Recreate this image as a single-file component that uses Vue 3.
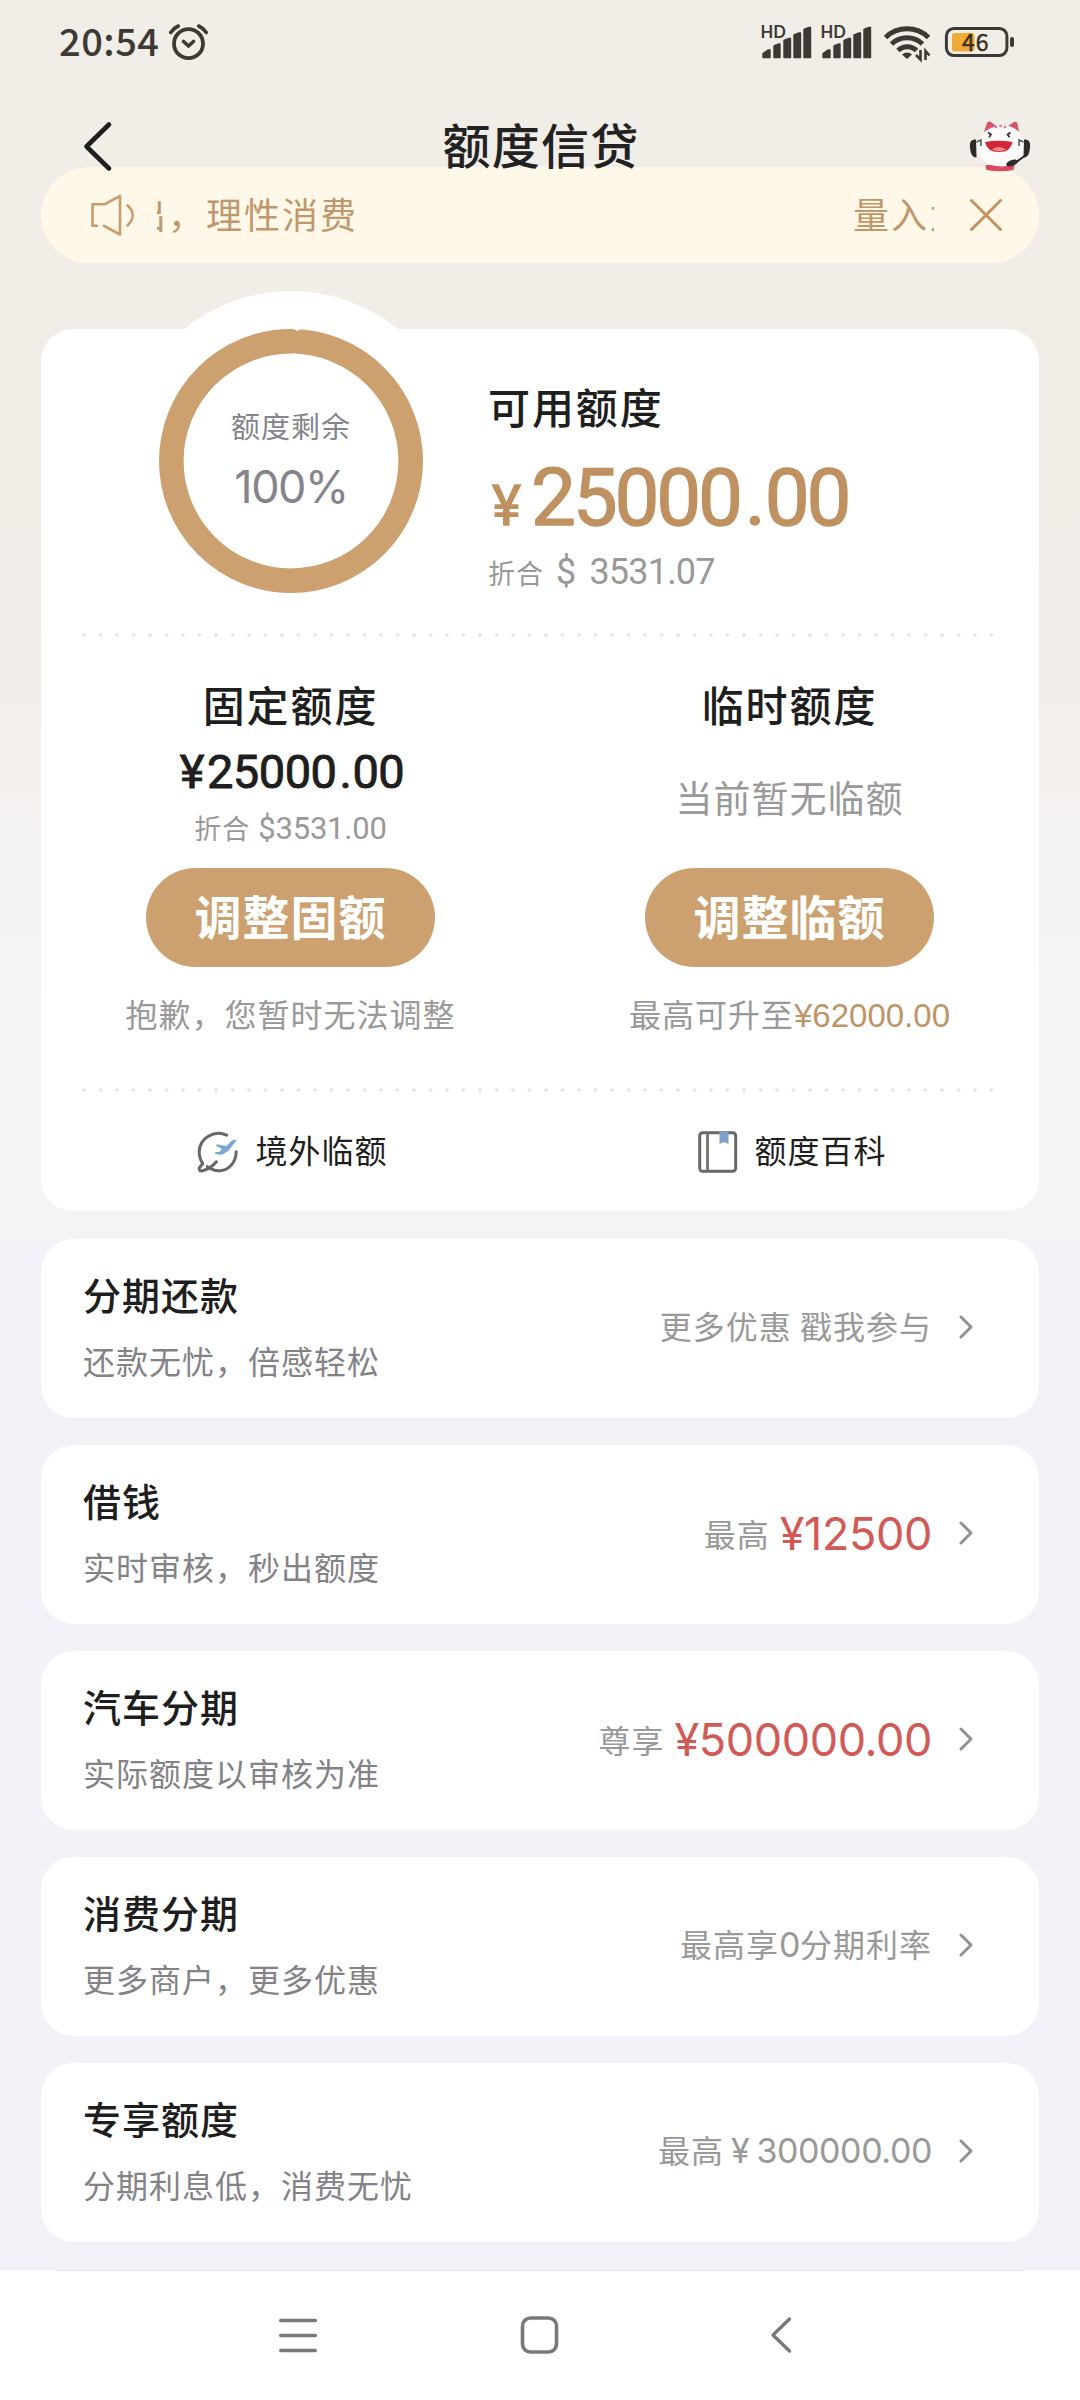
<script setup>
const offers = [
  { title: '分期还款', sub: '还款无忧，倍感轻松', note: '更多优惠 戳我参与' },
  { title: '借钱', sub: '实时审核，秒出额度', note: '最高', amount: '¥12500' },
  { title: '汽车分期', sub: '实际额度以审核为准', note: '尊享', amount: '¥500000.00' },
  { title: '消费分期', sub: '更多商户，更多优惠', note: '最高享', digits: '0', tail: '分期利率' },
  { title: '专享额度', sub: '分期利息低，消费无忧', note: '最高', yen: '¥', digits: '300000.00' }
]
const bars = [
  'M2 57.5V53.5L7 50H9V57.5Z',
  'M13 57.5V46L18 44H19V57.5Z',
  'M23 57.5V40.500L28 38.500H29.500V57.5Z',
  'M33 57.5V35L38 33H39.500V57.5Z',
  'M43 57.5V29.500L48 27.500H49.500V57.5Z'
]
</script>

<template>
  <div class="screen">
    <header class="status">
      <div class="clock">20:54</div>
      <svg class="alarm" width="42" height="40" viewBox="168 22 42 40" fill="none" stroke="#3d3935" stroke-linecap="round">
        <circle cx="188.500" cy="43.700" r="14.500" stroke-width="3.800" />
        <path d="M183.500 41.500l5 4.500 5-4.500" stroke-width="3.600" stroke-linejoin="round" />
        <path d="M170.700 32.500q3-4.500 7.600-6.500M206.300 32.500q-3-4.500-7.600-6.500" stroke-width="3.600" />
      </svg>
      <div class="indicators">
        <svg v-for="n in 2" :key="n" class="signal" width="60" height="80" viewBox="0 0 60 80">
          <text x="-0.500" y="38" class="hd">HD</text>
          <path v-for="b in bars" :key="b" :d="b" fill="#3d3935" stroke="#3d3935" stroke-width="1.400" stroke-linejoin="round" />
        </svg>
        <svg class="wifi" width="50" height="80" viewBox="882 0 50 80" fill="none" stroke="#3d3935" stroke-width="5">
          <path d="M885.500 37.500a31 31 0 0 1 43 0" />
          <path d="M891.500 44a22.500 22.500 0 0 1 31 0" />
          <path d="M898 50.500a13 13 0 0 1 18.500 0" />
          <path d="M907 59l-5-4.500q5-4 10 0z" fill="#3d3935" stroke="none" />
          <path d="M920.500 50v9.500l-4.500-4.500M925.500 60v-9l4 4.500" stroke-width="2.600" />
        </svg>
        <svg class="battery" width="74" height="80" viewBox="943 0 74 80">
          <rect x="952" y="33" width="22.500" height="18.500" rx="3" fill="#f0aa38" />
          <rect x="946.400" y="28.400" width="60.500" height="27.200" rx="7.500" fill="none" stroke="#3d3935" stroke-width="3" />
          <rect x="1010" y="37" width="4" height="10" rx="2" fill="#3d3935" />
          <text x="962" y="51" class="level">46</text>
        </svg>
      </div>
    </header>

    <nav class="titlebar">
      <svg class="back" width="34" height="56" viewBox="80 118 34 56">
        <path d="M109 124.500L86.500 146.500L109 168.500" fill="none" stroke="#1f1f1f" stroke-width="4.600" stroke-linecap="round" stroke-linejoin="round" />
      </svg>
      <h1>额度信贷</h1>
      <svg class="mascot" width="64" height="54" viewBox="968 118 64 54">
        <path d="M984 132l3-9q1-2.500 4-1l5 4zM1008 126l6-4q3-1 3.500 2l1.500 8z" fill="#d9506a" />
        <path d="M985.500 165h29l-1 5q-13 2.500-27 0z" fill="#dc4a60" />
        <path d="M1001.500 125.500c13-1 20.500 7 22.500 18 2.500 14-7 23-22.500 23s-25-9-22.500-23c2-11 9.500-17 22.500-18z" fill="#fdfafa" />
        <circle cx="996" cy="127" r="1.300" fill="#e2708a" /><circle cx="1000.500" cy="126" r="1.300" fill="#e2708a" /><circle cx="1005" cy="127" r="1.300" fill="#e2708a" />
        <path d="M988 132.500l3 2-2 2.800M1010.500 132.500l-3 2 2 2.800" fill="none" stroke="#2d2527" stroke-width="1.600" />
        <path d="M985 142q13.500-2.500 27.500 0-1.500 10-13.500 10t-14-10z" fill="#d02835" />
        <path d="M992 149.500q6.500-5 14 0-6 3.500-14 0z" fill="#ef8a8c" />
        <path d="M976 139.500q-7-1-6 8 .5 10 6.500 10zM1024 139.500q7-1 6 8-.5 10-6.500 10z" fill="#2e2a2c" />
        <path d="M976.500 142l4.500-2v6M1023.500 142l-4.500-2v6" fill="none" stroke="#555" stroke-width="1.500" />
        <path d="M1026 155l-11 8" stroke="#2e2a2c" stroke-width="2" />
        <ellipse cx="1012" cy="163" rx="6" ry="3" transform="rotate(-20 1012 163)" fill="#2e2a2c" />
      </svg>
    </nav>

    <section class="notice">
      <svg class="horn" width="46" height="44" viewBox="90 193 46 44" fill="none" stroke="#c89c6d" stroke-width="2.600" stroke-linecap="round" stroke-linejoin="round">
        <path d="M97 225.800h-4.500v-21.500h12l15.500-8.300v38.500l-16-8.700" />
        <path d="M127.500 205.500q10.500 9.500 0 20" />
      </svg>
      <div class="marquee">
        <span class="leaving">出，理性消费</span>
        <span class="entering">量入为出</span>
      </div>
      <svg class="close" width="36" height="36" viewBox="0 0 36 36">
        <path d="M3.500 3.500L32.500 32.500M32.500 3.500L3.500 32.500" stroke="#c4915f" stroke-width="3" stroke-linecap="round" />
      </svg>
    </section>

    <section class="quota">
      <div class="overview">
        <div class="ring">
          <svg width="264" height="264" viewBox="0 0 264 264">
            <circle cx="132" cy="132" r="119.700" fill="none" stroke="#cca16f" stroke-width="24.600" />
            <path d="M135 0h7l-4 2zM135 24l4 1.500 4-.5v2h-8z" fill="#fff" />
          </svg>
          <div class="ring-text">
            <span class="ring-label">额度剩余</span>
            <span class="ring-value">100%</span>
          </div>
        </div>
        <div class="available">
          <h2>可用额度</h2>
          <div class="total"><span class="total-yen">¥</span>25000<span class="point">.</span>00</div>
          <div class="usd">折合<span class="usd-num"><span class="dollar">$</span>3531.07</span></div>
        </div>
      </div>
      <div class="dots"></div>
      <div class="halves">
        <div class="half">
          <h2>固定额度</h2>
          <div class="mid">
            <div class="fixed-amount"><span class="fixed-yen">¥</span>25000<span class="fixed-point">.</span>00</div>
            <div class="fixed-usd">折合<span class="fixed-num">$3531.00</span></div>
          </div>
          <button>调整固额</button>
          <p>抱歉，您暂时无法调整</p>
        </div>
        <div class="half">
          <h2>临时额度</h2>
          <div class="mid empty">当前暂无临额</div>
          <button>调整临额</button>
          <p>最高可升至<span class="raise">¥62000.00</span></p>
        </div>
      </div>
      <div class="dots"></div>
      <div class="links">
        <div class="link">
          <svg width="42" height="42" viewBox="0 0 42 42" fill="none" stroke="#676767" stroke-width="3" stroke-linecap="round" stroke-linejoin="round">
            <path d="M29.700 4.200C17-1.500 2.500 7 2.200 20.700c0 5 1.300 8.500 3.600 11.800L2.300 37q-.5 3.500 3 2.800 8.500-2 14-9" />
            <path d="M39.200 20.700C39 32 31 40 22 39.700q-6.500-.3-11.700-4" />
            <path d="M39.600 9.300q-3-1.500-5.500 1L29.500 15l-9.700-1.700-1 1.500 6.200 3.200-2.500 2.700-4.300.5-.4 1.300 4.800 1.200 3-.2 6-4z" fill="#7ba6d3" stroke="none" />
          </svg>
          <span>境外临额</span>
        </div>
        <div class="link wiki">
          <svg width="40" height="44" viewBox="0 0 40 44" fill="none">
            <rect x="1.700" y="2.700" width="36" height="38.500" rx="3" stroke="#686868" stroke-width="3" />
            <path d="M9.500 3v38" stroke="#686868" stroke-width="2.600" />
            <path d="M21.500 1.500h9v12.500l-4.500-2-4.500 2z" fill="#7ba0cc" />
          </svg>
          <span>额度百科</span>
        </div>
      </div>
    </section>

    <section class="offers">
      <article v-for="o in offers" :key="o.title" class="offer">
        <div class="offer-text">
          <h3>{{ o.title }}</h3>
          <p>{{ o.sub }}</p>
        </div>
        <div class="offer-note">
          <span>{{ o.note }}</span><span v-if="o.yen" class="yen">{{ o.yen }}</span><span v-if="o.digits" class="digits">{{ o.digits }}</span><span v-if="o.tail">{{ o.tail }}</span><span v-if="o.amount" class="red">{{ o.amount }}</span>
        </div>
        <svg class="chevron" width="18" height="28" viewBox="0 0 18 28">
          <path d="M4 4L14 14L4 24" fill="none" stroke="#929292" stroke-width="3" stroke-linecap="round" stroke-linejoin="round" />
        </svg>
      </article>
    </section>

    <footer class="system">
      <svg width="40" height="40" viewBox="0 0 40 40" stroke="#797979" stroke-width="3.600" stroke-linecap="round">
        <path d="M2.800 5.500h34.500M2.800 20.500h34.500M2.800 35.500h34.500" />
      </svg>
      <svg width="40" height="40" viewBox="0 0 40 40">
        <rect x="2.500" y="3" width="34" height="34" rx="8" fill="none" stroke="#797979" stroke-width="3.600" />
      </svg>
      <svg width="40" height="40" viewBox="0 0 40 40">
        <path d="M27.500 4L11 20L27.500 36" fill="none" stroke="#797979" stroke-width="3.400" stroke-linecap="round" stroke-linejoin="round" />
      </svg>
    </footer>
  </div>
</template>

<style>
body {
  margin: 0;
}
</style>

<style scoped>
.screen {
  width: 1080px;
  height: 2400px;
  overflow: hidden;
  display: flex;
  flex-direction: column;
  font-family: "Noto Sans CJK SC", "Noto Sans", sans-serif;
  background: linear-gradient(#f1ede7 0, #f1ede7 480px, #f2eeea 660px, #f4f2f1 860px, #f4f4f3 1000px, #f4f4f4 1240px, #f2f3f8 1242px);
}
h1, h2, h3, p {
  margin: 0;
  font-weight: 500;
}
svg {
  display: block;
  flex: none;
}
.status {
  height: 80px;
  display: flex;
  align-items: center;
  padding-left: 59px;
  color: #3d3935;
}
.clock {
  width: 109px;
  font-size: 38px;
  line-height: 40px;
  letter-spacing: 0.5px;
  font-weight: 500;
}
.alarm {
  margin-top: 4px;
}
.indicators {
  display: flex;
  margin-left: 551px;
}
.signal {
  overflow: visible;
}
.hd {
  font: 700 16.500px "Lato", sans-serif;
  fill: #3d3935;
}
.wifi {
  margin-left: 1px;
}
.battery {
  margin-left: 11px;
}
.level {
  font: 400 23px "Noto Sans CJK SC", sans-serif;
  letter-spacing: 1px;
  fill: #3a2c1c;
  stroke: #3a2c1c;
  stroke-width: 0.400px;
}
.titlebar {
  position: relative;
  z-index: 1;
  height: 87px;
  display: flex;
  align-items: flex-start;
  padding: 0 48px 0 80px;
  justify-content: space-between;
}
.back {
  margin-top: 38px;
}
.mascot {
  margin-top: 38px;
}
h1 {
  margin-top: 33px;
  font-size: 48px;
  line-height: 60px;
  letter-spacing: 1.300px;
  color: #222;
}
.notice {
  height: 96px;
  margin: 0 41px 66px;
  border-radius: 48px;
  background: #fff8e8;
  display: flex;
  align-items: center;
  padding-left: 49px;
}
.marquee {
  width: 777px;
  height: 60px;
  margin-left: 21px;
  overflow: hidden;
  display: flex;
  white-space: nowrap;
  font-size: 36px;
  line-height: 56px;
  letter-spacing: 2px;
  color: #c0976b;
}
.leaving {
  margin-left: -27px;
}
.entering {
  margin-left: 495px;
}
.close {
  margin-left: 34px;
}
.quota {
  height: 882px;
  margin: 0 41px;
  border-radius: 32px;
  background: #fff;
  isolation: isolate;
}
.overview {
  height: 304px;
  display: flex;
}
.ring {
  position: relative;
  width: 264px;
  height: 264px;
  margin-left: 118px;
  display: grid;
}
.ring::before {
  content: "";
  position: absolute;
  inset: -38px;
  border-radius: 50%;
  background: #fff;
  z-index: -1;
}
.ring > * {
  grid-area: 1 / 1;
}
.ring-text {
  display: flex;
  flex-direction: column;
  align-items: center;
  color: #85848a;
}
.ring-label {
  margin-top: 76px;
  font-size: 29px;
  line-height: 40px;
  letter-spacing: 1px;
}
.ring-value {
  margin-top: 12px;
  font: 400 45px/60px "Inter", sans-serif;
  letter-spacing: -1.500px;
}
.available {
  margin-left: 65px;
}
h2 {
  font-size: 42px;
  line-height: 60px;
  letter-spacing: 1.900px;
  color: #1e1e1e;
}
.available h2 {
  margin-top: 47px;
}
.total {
  height: 80px;
  margin-top: 22px;
  font: 400 80px/80px "Roboto", sans-serif;
  -webkit-text-stroke: 1.300px #bf9060;
  letter-spacing: -3.200px;
  color: #bf9060;
  white-space: nowrap;
}
.total-yen {
  display: inline-block;
  width: 43px;
  padding-left: 4px;
  font-size: 55px;
  letter-spacing: 0;
  box-sizing: border-box;
}
.point {
  padding: 0 2px 0 5px;
}
.usd {
  margin-top: 14px;
  font-size: 27px;
  line-height: 40px;
  letter-spacing: 1px;
  color: #999;
  white-space: nowrap;
}
.usd-num {
  font: 400 36px/40px "Roboto", sans-serif;
  letter-spacing: -0.800px;
}
.dollar {
  margin: 0 14px 0 12px;
}
.dots {
  height: 4px;
  margin: 0 40px 0 41px;
  background: radial-gradient(circle at 2px 2px, #e6e6e6 1.500px, transparent 2px) 0 0 / 16.500px 4px repeat-x;
}
.halves {
  height: 451px;
  display: grid;
  grid-template-columns: 1fr 1fr;
}
.half {
  display: flex;
  flex-direction: column;
  align-items: center;
  padding-top: 37px;
}
.mid {
  height: 102px;
  margin: 13px 0 19px;
  text-align: center;
  white-space: nowrap;
}
.fixed-amount {
  padding-left: 3px;
  font: 400 47px/50px "Roboto", sans-serif;
  -webkit-text-stroke: 0.900px #1e1e1e;
  letter-spacing: -0.500px;
  color: #1e1e1e;
}
.fixed-yen {
  margin-right: 3px;
}
.fixed-point {
  padding: 0 1px 0 3px;
}
.fixed-usd {
  margin-top: 11px;
  font-size: 27px;
  line-height: 40px;
  letter-spacing: 1px;
  color: #999;
}
.fixed-num {
  margin-left: 8px;
  font: 400 31px/40px "Roboto", sans-serif;
  letter-spacing: -0.200px;
}
.empty {
  font-size: 37px;
  line-height: 100px;
  letter-spacing: 1px;
  color: #999;
}
button {
  width: 289px;
  height: 99px;
  border: 0;
  border-radius: 50px;
  padding: 0 0 6px;
  background: #cca16f;
  color: #fff;
  font: 700 47px/60px "Noto Sans CJK SC", sans-serif;
  letter-spacing: 1px;
}
.half p {
  margin-top: 26px;
  font-size: 32px;
  font-weight: 400;
  line-height: 40px;
  letter-spacing: 1px;
  color: #999;
  white-space: nowrap;
}
.raise {
  font: 400 33px/40px "Liberation Sans", sans-serif;
  letter-spacing: 0;
  color: #bf9466;
}
.links {
  height: 119px;
  display: grid;
  grid-template-columns: 1fr 1fr;
  font-size: 32px;
  line-height: 40px;
  letter-spacing: 1px;
  color: #1e1e1e;
}
.link {
  display: flex;
  align-items: center;
  justify-content: center;
  padding-left: 4px;
  gap: 16px;
}
.link.wiki {
  padding-left: 6px;
}
.link span {
  margin-top: -6px;
}
.offers {
  display: flex;
  flex-direction: column;
  gap: 27px;
  margin: 28px 41px 0;
}
.offer {
  height: 179px;
  border-radius: 33px;
  background: #fff;
  display: flex;
  align-items: center;
  padding: 0 64px 0 42px;
  box-sizing: border-box;
}
.offer-text {
  flex: 1;
  margin-top: -8px;
}
h3 {
  font-size: 38px;
  line-height: 50px;
  letter-spacing: 1px;
  color: #1e1e1e;
}
.offer p {
  margin-top: 21px;
  font-size: 32px;
  font-weight: 400;
  line-height: 40px;
  letter-spacing: 1px;
  color: #838287;
}
.offer-note {
  display: flex;
  height: 44px;
  align-items: baseline;
  margin: -8px 25px 0 0;
  font-size: 32px;
  line-height: 44px;
  letter-spacing: 1px;
  color: #999;
  white-space: nowrap;
}
.digits,
.yen {
  font: 400 34px/44px "Inter", sans-serif;
  letter-spacing: -0.400px;
}
.yen {
  margin: 0 7px 0 7px;
}
.red {
  position: relative;
  top: 3px;
  margin-left: 10px;
  font: 400 45px/44px "Inter", sans-serif;
  letter-spacing: -0.400px;
  color: #d15a57;
}
.chevron {
  margin-top: -3px;
}
.system {
  height: 130px;
  margin-top: 28px;
  background: linear-gradient(#e4e4e6, #e4e4e6) 56px 0 / 968px 1px no-repeat #fff;
  display: flex;
  align-items: center;
  justify-content: center;
  gap: 202px;
}
</style>
